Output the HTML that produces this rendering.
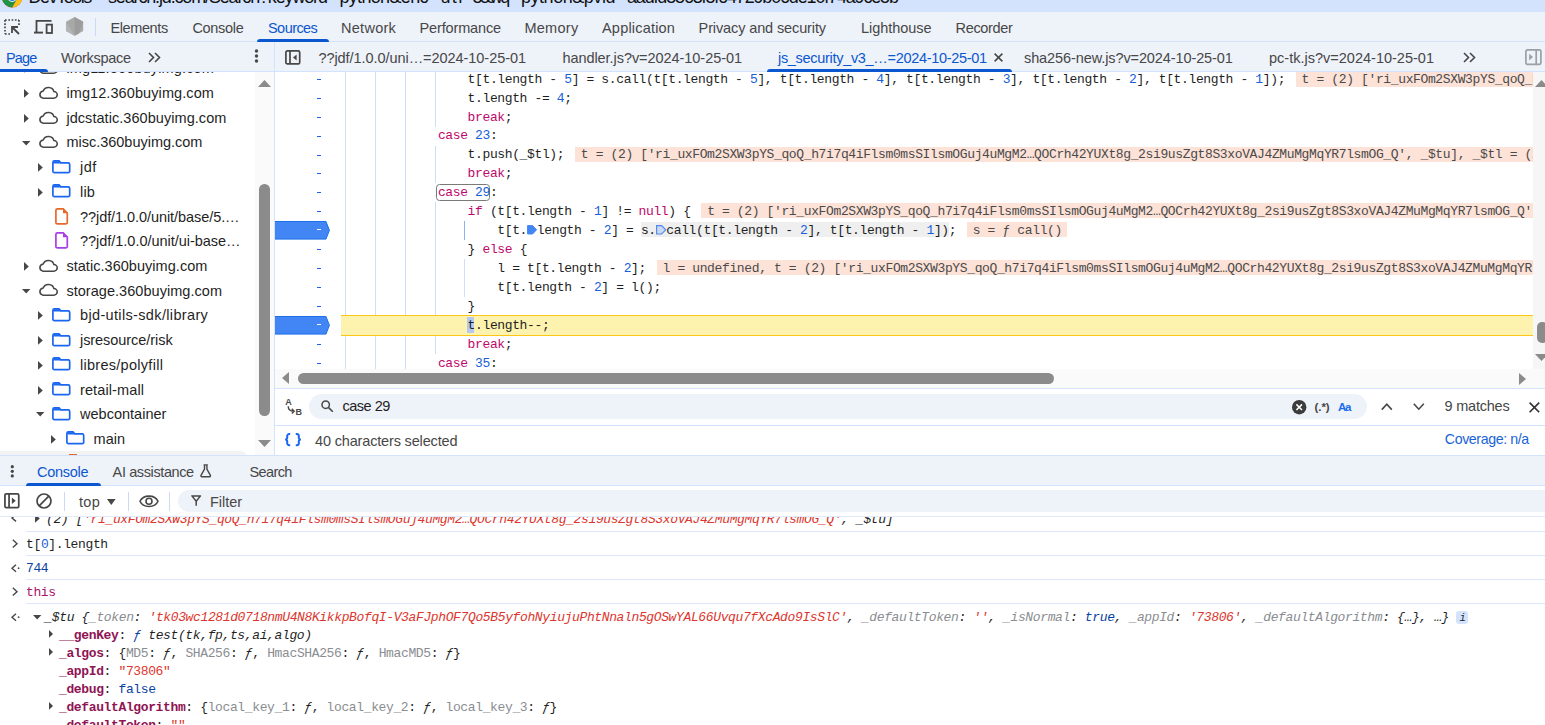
<!DOCTYPE html>
<html lang="en"><head><meta charset="utf-8"><title>DevTools</title>
<style>html,body{margin:0;padding:0;background:#fff;}body{width:1545px;height:725px;overflow:hidden;position:relative;-webkit-font-smoothing:antialiased;}svg{display:block;overflow:visible}</style></head>
<body>
<div style="position:absolute;left:0.00px;top:0.00px;width:1545.00px;height:12.00px;background:#d3e3fd;"></div>
<div style="position:absolute;left:0.00px;top:12.00px;width:1545.00px;height:29.50px;background:#eef2f9;"></div>
<div style="position:absolute;left:0.00px;top:41.00px;width:1545.00px;height:1.00px;background:#d3e3fd;"></div>
<div style="position:absolute;left:0.00px;top:42.00px;width:1545.00px;height:29.50px;background:#eef2f9;"></div>
<div style="position:absolute;left:0.00px;top:71.00px;width:1545.00px;height:1.00px;background:#d3e3fd;"></div>
<div style="position:absolute;left:274.00px;top:42.00px;width:1.00px;height:413.00px;background:#d3e3fd;"></div>
<svg style="position:absolute;left:2.00px;top:-13.50px;" width="20.40" height="20.40" viewBox="0 0 20 20" preserveAspectRatio="none">
<circle cx="10" cy="10" r="10" fill="#e33b2e"/>
<path d="M10 10 L1.34 5 A10 10 0 0 0 10 20 L14.3 12.5 Z" fill="#229342"/>
<path d="M10 10 L14.3 12.5 L10 20 A10 10 0 0 0 18.66 5 L10 5 Z" fill="#fbc116"/>
<circle cx="10" cy="10" r="4.6" fill="#fff"/>
<circle cx="10" cy="10" r="3.7" fill="#1a73e8"/></svg>
<div style="position:absolute;left:28.60px;top:-14.00px;height:22px;line-height:22px;font-family:'Liberation Sans', sans-serif;font-size:18px;color:#111;white-space:pre;letter-spacing:-1.4708px;">DevTools</div>
<div style="position:absolute;left:108.00px;top:-14.00px;height:22px;line-height:22px;font-family:'Liberation Sans', sans-serif;font-size:18px;color:#111;white-space:pre;letter-spacing:-1.1536px;">search.jd.com/Search?keyword</div>
<div style="position:absolute;left:339.40px;top:-14.00px;height:22px;line-height:22px;font-family:'Liberation Sans', sans-serif;font-size:18px;color:#111;white-space:pre;letter-spacing:-0.6609px;">python&amp;enc</div>
<div style="position:absolute;left:440.60px;top:-14.00px;height:22px;line-height:22px;font-family:'Liberation Sans', sans-serif;font-size:18px;color:#111;white-space:pre;letter-spacing:1.1537px;">utf</div>
<div style="position:absolute;left:472.50px;top:-14.00px;height:22px;line-height:22px;font-family:'Liberation Sans', sans-serif;font-size:18px;color:#111;white-space:pre;letter-spacing:-2.3804px;">8&amp;wq</div>
<div style="position:absolute;left:521.00px;top:-14.00px;height:22px;line-height:22px;font-family:'Liberation Sans', sans-serif;font-size:18px;color:#111;white-space:pre;letter-spacing:-0.4646px;">python&amp;pvid</div>
<div style="position:absolute;left:627.00px;top:-14.00px;height:22px;line-height:22px;font-family:'Liberation Sans', sans-serif;font-size:18px;color:#111;white-space:pre;letter-spacing:-1.1665px;">aadfd5563f5f64729b06de10f74a9ce5b</div>
<div style="position:absolute;left:97.00px;top:-17.00px;height:22px;line-height:22px;font-family:'Liberation Sans', sans-serif;font-size:18px;color:#111;white-space:pre;">-</div>
<div style="position:absolute;left:328.50px;top:-17.00px;height:22px;line-height:22px;font-family:'Liberation Sans', sans-serif;font-size:18px;color:#111;white-space:pre;">=</div>
<div style="position:absolute;left:429.50px;top:-17.00px;height:22px;line-height:22px;font-family:'Liberation Sans', sans-serif;font-size:18px;color:#111;white-space:pre;">=</div>
<div style="position:absolute;left:465.00px;top:-17.00px;height:22px;line-height:22px;font-family:'Liberation Sans', sans-serif;font-size:18px;color:#111;white-space:pre;">-</div>
<div style="position:absolute;left:510.50px;top:-17.00px;height:22px;line-height:22px;font-family:'Liberation Sans', sans-serif;font-size:18px;color:#111;white-space:pre;">=</div>
<div style="position:absolute;left:616.50px;top:-17.00px;height:22px;line-height:22px;font-family:'Liberation Sans', sans-serif;font-size:18px;color:#111;white-space:pre;">=</div>
<svg style="position:absolute;left:4.00px;top:19.00px;" width="16.00" height="16.00" viewBox="0 0 16 16" preserveAspectRatio="none">
<path d="M1 1 H15" stroke="#474747" stroke-width="1.7" stroke-dasharray="1.7 1.6" fill="none"/>
<path d="M1 1 V15" stroke="#474747" stroke-width="1.7" stroke-dasharray="1.7 1.6" fill="none"/>
<path d="M15 1 V6" stroke="#474747" stroke-width="1.7" stroke-dasharray="1.7 1.6" fill="none"/>
<path d="M1 15 H6" stroke="#474747" stroke-width="1.7" stroke-dasharray="1.7 1.6" fill="none"/>
<path d="M8 14 V8 H14 M8 8 L15 15" stroke="#474747" stroke-width="1.8" fill="none"/></svg>
<svg style="position:absolute;left:34.00px;top:19.50px;" width="19.00" height="14.00" viewBox="0 0 19 14" preserveAspectRatio="none">
<path d="M2.5 12 V0.9 H17.5" stroke="#474747" stroke-width="1.8" fill="none"/>
<path d="M0 12.6 H9" stroke="#474747" stroke-width="1.9" fill="none"/>
<rect x="12.6" y="4.6" width="5.4" height="8.4" stroke="#474747" stroke-width="1.8" fill="none"/></svg>
<svg style="position:absolute;left:65.80px;top:17.00px;" width="17.20" height="18.80" viewBox="0 0 17.2 18.8" preserveAspectRatio="none">
<path d="M8.6 0 L17.2 4.7 V14.1 L8.6 18.8 L0 14.1 V4.7 Z" fill="#a8a8a8"/>
<path d="M8.6 0 L17.2 4.7 L13 16.4 L8.6 18.8 Z" fill="#9c9c9c"/>
<path d="M0 4.7 L8.6 18.8 L0 14.1 Z" fill="#b4b4b4"/></svg>
<div style="position:absolute;left:95.00px;top:18.00px;width:1.00px;height:18.00px;background:#c9d9f6;"></div>
<div style="position:absolute;left:110.40px;top:19.00px;height:19px;line-height:19px;font-family:'Liberation Sans', sans-serif;font-size:14.5px;color:#474747;white-space:pre;letter-spacing:-0.3804px;">Elements</div>
<div style="position:absolute;left:192.40px;top:19.00px;height:19px;line-height:19px;font-family:'Liberation Sans', sans-serif;font-size:14.5px;color:#474747;white-space:pre;letter-spacing:-0.3082px;">Console</div>
<div style="position:absolute;left:268.00px;top:19.00px;height:19px;line-height:19px;font-family:'Liberation Sans', sans-serif;font-size:14.5px;color:#0b57d0;white-space:pre;letter-spacing:-0.5543px;">Sources</div>
<div style="position:absolute;left:341.00px;top:19.00px;height:19px;line-height:19px;font-family:'Liberation Sans', sans-serif;font-size:14.5px;color:#474747;white-space:pre;letter-spacing:0.2788px;">Network</div>
<div style="position:absolute;left:419.60px;top:19.00px;height:19px;line-height:19px;font-family:'Liberation Sans', sans-serif;font-size:14.5px;color:#474747;white-space:pre;letter-spacing:-0.1539px;">Performance</div>
<div style="position:absolute;left:524.40px;top:19.00px;height:19px;line-height:19px;font-family:'Liberation Sans', sans-serif;font-size:14.5px;color:#474747;white-space:pre;letter-spacing:0.2955px;">Memory</div>
<div style="position:absolute;left:602.00px;top:19.00px;height:19px;line-height:19px;font-family:'Liberation Sans', sans-serif;font-size:14.5px;color:#474747;white-space:pre;letter-spacing:0.1964px;">Application</div>
<div style="position:absolute;left:698.60px;top:19.00px;height:19px;line-height:19px;font-family:'Liberation Sans', sans-serif;font-size:14.5px;color:#474747;white-space:pre;letter-spacing:-0.1205px;">Privacy and security</div>
<div style="position:absolute;left:861.00px;top:19.00px;height:19px;line-height:19px;font-family:'Liberation Sans', sans-serif;font-size:14.5px;color:#474747;white-space:pre;letter-spacing:-0.0372px;">Lighthouse</div>
<div style="position:absolute;left:955.60px;top:19.00px;height:19px;line-height:19px;font-family:'Liberation Sans', sans-serif;font-size:14.5px;color:#474747;white-space:pre;letter-spacing:-0.3521px;">Recorder</div>
<div style="position:absolute;left:257.00px;top:39.00px;width:72.00px;height:3.00px;background:#0b57d0;border-radius:3px 3px 0 0;"></div>
<div style="position:absolute;left:6.00px;top:49.00px;height:19px;line-height:19px;font-family:'Liberation Sans', sans-serif;font-size:14.5px;color:#0b57d0;white-space:pre;letter-spacing:-0.8214px;">Page</div>
<div style="position:absolute;left:61.00px;top:49.00px;height:19px;line-height:19px;font-family:'Liberation Sans', sans-serif;font-size:14.5px;color:#474747;white-space:pre;letter-spacing:-0.2665px;">Workspace</div>
<div style="position:absolute;left:0.00px;top:69.00px;width:48.40px;height:2.60px;background:#0b57d0;border-radius:0 3px 0 0;"></div>
<svg style="position:absolute;left:148.20px;top:51.50px;" width="13.00" height="11.00" viewBox="0 0 13 11" preserveAspectRatio="none"><path d="M1 1 L5.5 5.5 L1 10 M7 1 L11.5 5.5 L7 10" stroke="#474747" stroke-width="1.6" fill="none"/></svg>
<svg style="position:absolute;left:254.20px;top:49.40px;" width="5.00" height="14.40" viewBox="0 0 5 14.4" preserveAspectRatio="none"><circle cx="2.5" cy="2" r="1.7" fill="#474747"/><circle cx="2.5" cy="7" r="1.7" fill="#474747"/><circle cx="2.5" cy="12" r="1.7" fill="#474747"/></svg>
<svg style="position:absolute;left:285.00px;top:49.60px;" width="15.60" height="14.80" viewBox="0 0 15.6 14.8" preserveAspectRatio="none">
<rect x="0.9" y="0.9" width="13.8" height="13" rx="1.5" stroke="#474747" stroke-width="1.7" fill="none"/>
<path d="M5 1 V14" stroke="#474747" stroke-width="1.7"/>
<path d="M11.6 4.4 L8 7.4 L11.6 10.4 Z" fill="#474747"/></svg>
<div style="position:absolute;left:318.40px;top:49.00px;height:19px;line-height:19px;font-family:'Liberation Sans', sans-serif;font-size:14.5px;color:#474747;white-space:pre;letter-spacing:-0.0543px;">??jdf/1.0.0/uni…=2024-10-25-01</div>
<div style="position:absolute;left:562.40px;top:49.00px;height:19px;line-height:19px;font-family:'Liberation Sans', sans-serif;font-size:14.5px;color:#474747;white-space:pre;letter-spacing:-0.0543px;">handler.js?v=2024-10-25-01</div>
<div style="position:absolute;left:778.00px;top:49.00px;height:19px;line-height:19px;font-family:'Liberation Sans', sans-serif;font-size:14.5px;color:#0b57d0;white-space:pre;letter-spacing:-0.3061px;">js_security_v3_…=2024-10-25-01</div>
<div style="position:absolute;left:1024.00px;top:49.00px;height:19px;line-height:19px;font-family:'Liberation Sans', sans-serif;font-size:14.5px;color:#474747;white-space:pre;letter-spacing:-0.0986px;">sha256-new.js?v=2024-10-25-01</div>
<div style="position:absolute;left:1269.00px;top:49.00px;height:19px;line-height:19px;font-family:'Liberation Sans', sans-serif;font-size:14.5px;color:#474747;white-space:pre;letter-spacing:0.0066px;">pc-tk.js?v=2024-10-25-01</div>
<svg style="position:absolute;left:993.60px;top:53.20px;" width="9.00" height="9.00" viewBox="0 0 9 9" preserveAspectRatio="none"><path d="M0.6 0.6 L8.4 8.4 M8.4 0.6 L0.6 8.4" stroke="#474747" stroke-width="1.5"/></svg>
<div style="position:absolute;left:767.00px;top:69.00px;width:244.60px;height:3.00px;background:#0b57d0;border-radius:3px 3px 0 0;"></div>
<svg style="position:absolute;left:1463.40px;top:51.50px;" width="13.00" height="11.00" viewBox="0 0 13 11" preserveAspectRatio="none"><path d="M1 1 L5.5 5.5 L1 10 M7 1 L11.5 5.5 L7 10" stroke="#474747" stroke-width="1.6" fill="none"/></svg>
<svg style="position:absolute;left:1525.40px;top:48.60px;" width="19.60" height="16.40" viewBox="0 0 19.6 16.4" preserveAspectRatio="none">
<rect x="0.9" y="0.9" width="15" height="14.4" rx="1.5" stroke="#9aa0a6" stroke-width="1.7" fill="none"/>
<path d="M11.2 1 V15" stroke="#9aa0a6" stroke-width="1.7"/>
<path d="M4.2 4.8 L8 8.1 L4.2 11.4 Z" fill="#9aa0a6"/></svg>
<div style="position:absolute;left:0;top:72px;width:274px;height:383px;overflow:hidden;background:#fff">
<svg style="position:absolute;left:23.60px;top:-7.71px;" width="4.80" height="8.80" viewBox="0 0 4.8 8.8" preserveAspectRatio="none"><path d="M0 0 L4.8 4.4 L0 8.8 Z" fill="#474747"/></svg>
<svg style="position:absolute;left:38.00px;top:-9.91px;" width="20.00" height="12.00" viewBox="0 0 20 12.8" preserveAspectRatio="none"><path d="M5.2 11.9 H15.6 A3.5 3.5 0 0 0 15.9 4.9 A5.6 5.6 0 0 0 5.2 4.2 A3.9 3.9 0 0 0 5.2 11.9 Z" stroke="#474747" stroke-width="1.6" fill="none" stroke-linejoin="round"/></svg>
<div style="position:absolute;left:66.40px;top:-13.00px;height:19px;line-height:19px;font-family:'Liberation Sans', sans-serif;font-size:14.5px;color:#1f1f1f;white-space:pre;letter-spacing:0.1507px;">img11.360buyimg.com</div>
<svg style="position:absolute;left:23.60px;top:17.00px;" width="4.80" height="8.80" viewBox="0 0 4.8 8.8" preserveAspectRatio="none"><path d="M0 0 L4.8 4.4 L0 8.8 Z" fill="#474747"/></svg>
<svg style="position:absolute;left:38.00px;top:14.80px;" width="20.00" height="12.00" viewBox="0 0 20 12.8" preserveAspectRatio="none"><path d="M5.2 11.9 H15.6 A3.5 3.5 0 0 0 15.9 4.9 A5.6 5.6 0 0 0 5.2 4.2 A3.9 3.9 0 0 0 5.2 11.9 Z" stroke="#474747" stroke-width="1.6" fill="none" stroke-linejoin="round"/></svg>
<div style="position:absolute;left:66.40px;top:12.00px;height:19px;line-height:19px;font-family:'Liberation Sans', sans-serif;font-size:14.5px;color:#1f1f1f;white-space:pre;letter-spacing:0.0924px;">img12.360buyimg.com</div>
<svg style="position:absolute;left:23.60px;top:41.71px;" width="4.80" height="8.80" viewBox="0 0 4.8 8.8" preserveAspectRatio="none"><path d="M0 0 L4.8 4.4 L0 8.8 Z" fill="#474747"/></svg>
<svg style="position:absolute;left:38.00px;top:39.51px;" width="20.00" height="12.00" viewBox="0 0 20 12.8" preserveAspectRatio="none"><path d="M5.2 11.9 H15.6 A3.5 3.5 0 0 0 15.9 4.9 A5.6 5.6 0 0 0 5.2 4.2 A3.9 3.9 0 0 0 5.2 11.9 Z" stroke="#474747" stroke-width="1.6" fill="none" stroke-linejoin="round"/></svg>
<div style="position:absolute;left:66.40px;top:37.00px;height:19px;line-height:19px;font-family:'Liberation Sans', sans-serif;font-size:14.5px;color:#1f1f1f;white-space:pre;letter-spacing:0.0549px;">jdcstatic.360buyimg.com</div>
<svg style="position:absolute;left:22.00px;top:68.62px;" width="8.40" height="4.60" viewBox="0 0 8.4 4.6" preserveAspectRatio="none"><path d="M0 0 H8.4 L4.2 4.6 Z" fill="#474747"/></svg>
<svg style="position:absolute;left:38.00px;top:64.22px;" width="20.00" height="12.00" viewBox="0 0 20 12.8" preserveAspectRatio="none"><path d="M5.2 11.9 H15.6 A3.5 3.5 0 0 0 15.9 4.9 A5.6 5.6 0 0 0 5.2 4.2 A3.9 3.9 0 0 0 5.2 11.9 Z" stroke="#474747" stroke-width="1.6" fill="none" stroke-linejoin="round"/></svg>
<div style="position:absolute;left:66.40px;top:61.00px;height:19px;line-height:19px;font-family:'Liberation Sans', sans-serif;font-size:14.5px;color:#1f1f1f;white-space:pre;letter-spacing:-0.0107px;">misc.360buyimg.com</div>
<svg style="position:absolute;left:38.00px;top:91.13px;" width="4.80" height="8.80" viewBox="0 0 4.8 8.8" preserveAspectRatio="none"><path d="M0 0 L4.8 4.4 L0 8.8 Z" fill="#474747"/></svg>
<svg style="position:absolute;left:52.00px;top:87.53px;" width="18.60" height="13.60" viewBox="0 0 18.6 13.6" preserveAspectRatio="none"><path d="M2.4 0.9 H7 L8.8 2.9 H16.2 A1.5 1.5 0 0 1 17.7 4.4 V11.2 A1.5 1.5 0 0 1 16.2 12.7 H2.4 A1.5 1.5 0 0 1 0.9 11.2 V2.4 A1.5 1.5 0 0 1 2.4 0.9 Z" stroke="#1a66f0" stroke-width="1.7" fill="none"/><path d="M1.4 1.2 H7 L8.8 3.4 H1.4 Z" fill="#1a66f0"/></svg>
<div style="position:absolute;left:80.00px;top:86.00px;height:19px;line-height:19px;font-family:'Liberation Sans', sans-serif;font-size:14.5px;color:#1f1f1f;white-space:pre;letter-spacing:0.4288px;">jdf</div>
<svg style="position:absolute;left:38.00px;top:115.84px;" width="4.80" height="8.80" viewBox="0 0 4.8 8.8" preserveAspectRatio="none"><path d="M0 0 L4.8 4.4 L0 8.8 Z" fill="#474747"/></svg>
<svg style="position:absolute;left:52.00px;top:112.24px;" width="18.60" height="13.60" viewBox="0 0 18.6 13.6" preserveAspectRatio="none"><path d="M2.4 0.9 H7 L8.8 2.9 H16.2 A1.5 1.5 0 0 1 17.7 4.4 V11.2 A1.5 1.5 0 0 1 16.2 12.7 H2.4 A1.5 1.5 0 0 1 0.9 11.2 V2.4 A1.5 1.5 0 0 1 2.4 0.9 Z" stroke="#1a66f0" stroke-width="1.7" fill="none"/><path d="M1.4 1.2 H7 L8.8 3.4 H1.4 Z" fill="#1a66f0"/></svg>
<div style="position:absolute;left:80.00px;top:111.00px;height:19px;line-height:19px;font-family:'Liberation Sans', sans-serif;font-size:14.5px;color:#1f1f1f;white-space:pre;letter-spacing:0.1938px;">lib</div>
<svg style="position:absolute;left:55.40px;top:135.75px;" width="13.20" height="16.80" viewBox="0 0 13.2 16.8" preserveAspectRatio="none"><path d="M2.4 0.9 H8.2 L12.3 5 V14.4 A1.5 1.5 0 0 1 10.8 15.9 H2.4 A1.5 1.5 0 0 1 0.9 14.4 V2.4 A1.5 1.5 0 0 1 2.4 0.9 Z" stroke="#e8682a" stroke-width="1.7" fill="none"/><path d="M8 1 V5.2 H12.2 Z" fill="#e8682a"/></svg>
<div style="position:absolute;left:80.00px;top:136.00px;height:19px;line-height:19px;font-family:'Liberation Sans', sans-serif;font-size:14.5px;color:#1f1f1f;white-space:pre;letter-spacing:-0.0667px;">??jdf/1.0.0/unit/base/5.…</div>
<svg style="position:absolute;left:55.40px;top:160.46px;" width="13.20" height="16.80" viewBox="0 0 13.2 16.8" preserveAspectRatio="none"><path d="M2.4 0.9 H8.2 L12.3 5 V14.4 A1.5 1.5 0 0 1 10.8 15.9 H2.4 A1.5 1.5 0 0 1 0.9 14.4 V2.4 A1.5 1.5 0 0 1 2.4 0.9 Z" stroke="#a83ee6" stroke-width="1.7" fill="none"/><path d="M8 1 V5.2 H12.2 Z" fill="#a83ee6"/></svg>
<div style="position:absolute;left:80.00px;top:160.00px;height:19px;line-height:19px;font-family:'Liberation Sans', sans-serif;font-size:14.5px;color:#1f1f1f;white-space:pre;letter-spacing:-0.0253px;">??jdf/1.0.0/unit/ui-base…</div>
<svg style="position:absolute;left:23.60px;top:189.97px;" width="4.80" height="8.80" viewBox="0 0 4.8 8.8" preserveAspectRatio="none"><path d="M0 0 L4.8 4.4 L0 8.8 Z" fill="#474747"/></svg>
<svg style="position:absolute;left:38.00px;top:187.77px;" width="20.00" height="12.00" viewBox="0 0 20 12.8" preserveAspectRatio="none"><path d="M5.2 11.9 H15.6 A3.5 3.5 0 0 0 15.9 4.9 A5.6 5.6 0 0 0 5.2 4.2 A3.9 3.9 0 0 0 5.2 11.9 Z" stroke="#474747" stroke-width="1.6" fill="none" stroke-linejoin="round"/></svg>
<div style="position:absolute;left:66.40px;top:185.00px;height:19px;line-height:19px;font-family:'Liberation Sans', sans-serif;font-size:14.5px;color:#1f1f1f;white-space:pre;letter-spacing:0.0393px;">static.360buyimg.com</div>
<svg style="position:absolute;left:22.00px;top:216.88px;" width="8.40" height="4.60" viewBox="0 0 8.4 4.6" preserveAspectRatio="none"><path d="M0 0 H8.4 L4.2 4.6 Z" fill="#474747"/></svg>
<svg style="position:absolute;left:38.00px;top:212.48px;" width="20.00" height="12.00" viewBox="0 0 20 12.8" preserveAspectRatio="none"><path d="M5.2 11.9 H15.6 A3.5 3.5 0 0 0 15.9 4.9 A5.6 5.6 0 0 0 5.2 4.2 A3.9 3.9 0 0 0 5.2 11.9 Z" stroke="#474747" stroke-width="1.6" fill="none" stroke-linejoin="round"/></svg>
<div style="position:absolute;left:66.40px;top:210.00px;height:19px;line-height:19px;font-family:'Liberation Sans', sans-serif;font-size:14.5px;color:#1f1f1f;white-space:pre;letter-spacing:0.0415px;">storage.360buyimg.com</div>
<svg style="position:absolute;left:38.00px;top:239.39px;" width="4.80" height="8.80" viewBox="0 0 4.8 8.8" preserveAspectRatio="none"><path d="M0 0 L4.8 4.4 L0 8.8 Z" fill="#474747"/></svg>
<svg style="position:absolute;left:52.00px;top:235.79px;" width="18.60" height="13.60" viewBox="0 0 18.6 13.6" preserveAspectRatio="none"><path d="M2.4 0.9 H7 L8.8 2.9 H16.2 A1.5 1.5 0 0 1 17.7 4.4 V11.2 A1.5 1.5 0 0 1 16.2 12.7 H2.4 A1.5 1.5 0 0 1 0.9 11.2 V2.4 A1.5 1.5 0 0 1 2.4 0.9 Z" stroke="#1a66f0" stroke-width="1.7" fill="none"/><path d="M1.4 1.2 H7 L8.8 3.4 H1.4 Z" fill="#1a66f0"/></svg>
<div style="position:absolute;left:80.00px;top:234.00px;height:19px;line-height:19px;font-family:'Liberation Sans', sans-serif;font-size:14.5px;color:#1f1f1f;white-space:pre;letter-spacing:0.3476px;">bjd-utils-sdk/library</div>
<svg style="position:absolute;left:38.00px;top:264.10px;" width="4.80" height="8.80" viewBox="0 0 4.8 8.8" preserveAspectRatio="none"><path d="M0 0 L4.8 4.4 L0 8.8 Z" fill="#474747"/></svg>
<svg style="position:absolute;left:52.00px;top:260.50px;" width="18.60" height="13.60" viewBox="0 0 18.6 13.6" preserveAspectRatio="none"><path d="M2.4 0.9 H7 L8.8 2.9 H16.2 A1.5 1.5 0 0 1 17.7 4.4 V11.2 A1.5 1.5 0 0 1 16.2 12.7 H2.4 A1.5 1.5 0 0 1 0.9 11.2 V2.4 A1.5 1.5 0 0 1 2.4 0.9 Z" stroke="#1a66f0" stroke-width="1.7" fill="none"/><path d="M1.4 1.2 H7 L8.8 3.4 H1.4 Z" fill="#1a66f0"/></svg>
<div style="position:absolute;left:80.00px;top:259.00px;height:19px;line-height:19px;font-family:'Liberation Sans', sans-serif;font-size:14.5px;color:#1f1f1f;white-space:pre;letter-spacing:-0.0599px;">jsresource/risk</div>
<svg style="position:absolute;left:38.00px;top:288.81px;" width="4.80" height="8.80" viewBox="0 0 4.8 8.8" preserveAspectRatio="none"><path d="M0 0 L4.8 4.4 L0 8.8 Z" fill="#474747"/></svg>
<svg style="position:absolute;left:52.00px;top:285.21px;" width="18.60" height="13.60" viewBox="0 0 18.6 13.6" preserveAspectRatio="none"><path d="M2.4 0.9 H7 L8.8 2.9 H16.2 A1.5 1.5 0 0 1 17.7 4.4 V11.2 A1.5 1.5 0 0 1 16.2 12.7 H2.4 A1.5 1.5 0 0 1 0.9 11.2 V2.4 A1.5 1.5 0 0 1 2.4 0.9 Z" stroke="#1a66f0" stroke-width="1.7" fill="none"/><path d="M1.4 1.2 H7 L8.8 3.4 H1.4 Z" fill="#1a66f0"/></svg>
<div style="position:absolute;left:80.00px;top:284.00px;height:19px;line-height:19px;font-family:'Liberation Sans', sans-serif;font-size:14.5px;color:#1f1f1f;white-space:pre;letter-spacing:0.2769px;">libres/polyfill</div>
<svg style="position:absolute;left:38.00px;top:313.52px;" width="4.80" height="8.80" viewBox="0 0 4.8 8.8" preserveAspectRatio="none"><path d="M0 0 L4.8 4.4 L0 8.8 Z" fill="#474747"/></svg>
<svg style="position:absolute;left:52.00px;top:309.92px;" width="18.60" height="13.60" viewBox="0 0 18.6 13.6" preserveAspectRatio="none"><path d="M2.4 0.9 H7 L8.8 2.9 H16.2 A1.5 1.5 0 0 1 17.7 4.4 V11.2 A1.5 1.5 0 0 1 16.2 12.7 H2.4 A1.5 1.5 0 0 1 0.9 11.2 V2.4 A1.5 1.5 0 0 1 2.4 0.9 Z" stroke="#1a66f0" stroke-width="1.7" fill="none"/><path d="M1.4 1.2 H7 L8.8 3.4 H1.4 Z" fill="#1a66f0"/></svg>
<div style="position:absolute;left:80.00px;top:309.00px;height:19px;line-height:19px;font-family:'Liberation Sans', sans-serif;font-size:14.5px;color:#1f1f1f;white-space:pre;letter-spacing:0.1101px;">retail-mall</div>
<svg style="position:absolute;left:36.00px;top:340.43px;" width="8.40" height="4.60" viewBox="0 0 8.4 4.6" preserveAspectRatio="none"><path d="M0 0 H8.4 L4.2 4.6 Z" fill="#474747"/></svg>
<svg style="position:absolute;left:52.00px;top:334.63px;" width="18.60" height="13.60" viewBox="0 0 18.6 13.6" preserveAspectRatio="none"><path d="M2.4 0.9 H7 L8.8 2.9 H16.2 A1.5 1.5 0 0 1 17.7 4.4 V11.2 A1.5 1.5 0 0 1 16.2 12.7 H2.4 A1.5 1.5 0 0 1 0.9 11.2 V2.4 A1.5 1.5 0 0 1 2.4 0.9 Z" stroke="#1a66f0" stroke-width="1.7" fill="none"/><path d="M1.4 1.2 H7 L8.8 3.4 H1.4 Z" fill="#1a66f0"/></svg>
<div style="position:absolute;left:80.00px;top:333.00px;height:19px;line-height:19px;font-family:'Liberation Sans', sans-serif;font-size:14.5px;color:#1f1f1f;white-space:pre;letter-spacing:0.0130px;">webcontainer</div>
<svg style="position:absolute;left:51.00px;top:362.94px;" width="4.80" height="8.80" viewBox="0 0 4.8 8.8" preserveAspectRatio="none"><path d="M0 0 L4.8 4.4 L0 8.8 Z" fill="#474747"/></svg>
<svg style="position:absolute;left:66.00px;top:359.34px;" width="18.60" height="13.60" viewBox="0 0 18.6 13.6" preserveAspectRatio="none"><path d="M2.4 0.9 H7 L8.8 2.9 H16.2 A1.5 1.5 0 0 1 17.7 4.4 V11.2 A1.5 1.5 0 0 1 16.2 12.7 H2.4 A1.5 1.5 0 0 1 0.9 11.2 V2.4 A1.5 1.5 0 0 1 2.4 0.9 Z" stroke="#1a66f0" stroke-width="1.7" fill="none"/><path d="M1.4 1.2 H7 L8.8 3.4 H1.4 Z" fill="#1a66f0"/></svg>
<div style="position:absolute;left:93.60px;top:358.00px;height:19px;line-height:19px;font-family:'Liberation Sans', sans-serif;font-size:14.5px;color:#1f1f1f;white-space:pre;letter-spacing:-0.0107px;">main</div>
<div style="position:absolute;left:0.00px;top:379.00px;width:248.00px;height:10.00px;background:#f3f3f3;border-radius:0 8px 0 0;"></div>
<div style="position:absolute;left:69.00px;top:382.00px;width:8.00px;height:2.00px;background:#e8682a;"></div>
<div style="position:absolute;left:255.00px;top:0.00px;width:19.00px;height:384.00px;background:#fafafa;"></div>
<svg style="position:absolute;left:258.20px;top:7.80px;" width="13.00" height="7.20" viewBox="0 0 13 7.2" preserveAspectRatio="none"><path d="M0 7 L6.5 0 L13 7 Z" fill="#8b8b8b"/></svg>
<svg style="position:absolute;left:258.40px;top:368.00px;" width="13.00" height="7.00" viewBox="0 0 13 7" preserveAspectRatio="none"><path d="M0 0 L6.5 7 L13 0 Z" fill="#8b8b8b"/></svg>
<div style="position:absolute;left:259.40px;top:112.00px;width:10.80px;height:231.60px;background:#8b8b8b;border-radius:5.4px;"></div>
</div>
<div style="position:absolute;left:275px;top:72px;width:1258px;height:297px;overflow:hidden;background:#fff">
<div style="position:absolute;left:70.40px;top:-1.70px;width:1.00px;height:18.90px;background:#cfdef8;"></div>
<div style="position:absolute;left:100.12px;top:-1.70px;width:1.00px;height:18.90px;background:#cfdef8;"></div>
<div style="position:absolute;left:129.85px;top:-1.70px;width:1.00px;height:18.90px;background:#cfdef8;"></div>
<div style="position:absolute;left:159.57px;top:-1.70px;width:1.00px;height:18.90px;background:#cfdef8;"></div>
<div style="position:absolute;left:70.40px;top:16.90px;width:1.00px;height:19.20px;background:#cfdef8;"></div>
<div style="position:absolute;left:100.12px;top:16.90px;width:1.00px;height:19.20px;background:#cfdef8;"></div>
<div style="position:absolute;left:129.85px;top:16.90px;width:1.00px;height:19.20px;background:#cfdef8;"></div>
<div style="position:absolute;left:159.57px;top:16.90px;width:1.00px;height:19.20px;background:#cfdef8;"></div>
<div style="position:absolute;left:70.40px;top:35.80px;width:1.00px;height:19.20px;background:#cfdef8;"></div>
<div style="position:absolute;left:100.12px;top:35.80px;width:1.00px;height:19.20px;background:#cfdef8;"></div>
<div style="position:absolute;left:129.85px;top:35.80px;width:1.00px;height:19.20px;background:#cfdef8;"></div>
<div style="position:absolute;left:159.57px;top:35.80px;width:1.00px;height:19.20px;background:#cfdef8;"></div>
<div style="position:absolute;left:70.40px;top:54.70px;width:1.00px;height:19.30px;background:#cfdef8;"></div>
<div style="position:absolute;left:100.12px;top:54.70px;width:1.00px;height:19.30px;background:#cfdef8;"></div>
<div style="position:absolute;left:129.85px;top:54.70px;width:1.00px;height:19.30px;background:#cfdef8;"></div>
<div style="position:absolute;left:70.40px;top:73.70px;width:1.00px;height:18.60px;background:#cfdef8;"></div>
<div style="position:absolute;left:100.12px;top:73.70px;width:1.00px;height:18.60px;background:#cfdef8;"></div>
<div style="position:absolute;left:129.85px;top:73.70px;width:1.00px;height:18.60px;background:#cfdef8;"></div>
<div style="position:absolute;left:159.57px;top:73.70px;width:1.00px;height:18.60px;background:#cfdef8;"></div>
<div style="position:absolute;left:70.40px;top:92.00px;width:1.00px;height:19.40px;background:#cfdef8;"></div>
<div style="position:absolute;left:100.12px;top:92.00px;width:1.00px;height:19.40px;background:#cfdef8;"></div>
<div style="position:absolute;left:129.85px;top:92.00px;width:1.00px;height:19.40px;background:#cfdef8;"></div>
<div style="position:absolute;left:159.57px;top:92.00px;width:1.00px;height:19.40px;background:#cfdef8;"></div>
<div style="position:absolute;left:70.40px;top:111.10px;width:1.00px;height:19.10px;background:#cfdef8;"></div>
<div style="position:absolute;left:100.12px;top:111.10px;width:1.00px;height:19.10px;background:#cfdef8;"></div>
<div style="position:absolute;left:129.85px;top:111.10px;width:1.00px;height:19.10px;background:#cfdef8;"></div>
<div style="position:absolute;left:70.40px;top:129.90px;width:1.00px;height:19.30px;background:#cfdef8;"></div>
<div style="position:absolute;left:100.12px;top:129.90px;width:1.00px;height:19.30px;background:#cfdef8;"></div>
<div style="position:absolute;left:129.85px;top:129.90px;width:1.00px;height:19.30px;background:#cfdef8;"></div>
<div style="position:absolute;left:159.57px;top:129.90px;width:1.00px;height:19.30px;background:#cfdef8;"></div>
<div style="position:absolute;left:70.40px;top:148.90px;width:1.00px;height:19.50px;background:#cfdef8;"></div>
<div style="position:absolute;left:100.12px;top:148.90px;width:1.00px;height:19.50px;background:#cfdef8;"></div>
<div style="position:absolute;left:129.85px;top:148.90px;width:1.00px;height:19.50px;background:#cfdef8;"></div>
<div style="position:absolute;left:159.57px;top:148.90px;width:1.00px;height:19.50px;background:#cfdef8;"></div>
<div style="position:absolute;left:189.30px;top:148.90px;width:1.00px;height:19.50px;background:#8fb2ee;"></div>
<div style="position:absolute;left:70.40px;top:168.10px;width:1.00px;height:19.20px;background:#cfdef8;"></div>
<div style="position:absolute;left:100.12px;top:168.10px;width:1.00px;height:19.20px;background:#cfdef8;"></div>
<div style="position:absolute;left:129.85px;top:168.10px;width:1.00px;height:19.20px;background:#cfdef8;"></div>
<div style="position:absolute;left:159.57px;top:168.10px;width:1.00px;height:19.20px;background:#cfdef8;"></div>
<div style="position:absolute;left:70.40px;top:187.00px;width:1.00px;height:19.10px;background:#cfdef8;"></div>
<div style="position:absolute;left:100.12px;top:187.00px;width:1.00px;height:19.10px;background:#cfdef8;"></div>
<div style="position:absolute;left:129.85px;top:187.00px;width:1.00px;height:19.10px;background:#cfdef8;"></div>
<div style="position:absolute;left:159.57px;top:187.00px;width:1.00px;height:19.10px;background:#cfdef8;"></div>
<div style="position:absolute;left:189.30px;top:187.00px;width:1.00px;height:19.10px;background:#cfdef8;"></div>
<div style="position:absolute;left:70.40px;top:205.80px;width:1.00px;height:19.30px;background:#cfdef8;"></div>
<div style="position:absolute;left:100.12px;top:205.80px;width:1.00px;height:19.30px;background:#cfdef8;"></div>
<div style="position:absolute;left:129.85px;top:205.80px;width:1.00px;height:19.30px;background:#cfdef8;"></div>
<div style="position:absolute;left:159.57px;top:205.80px;width:1.00px;height:19.30px;background:#cfdef8;"></div>
<div style="position:absolute;left:189.30px;top:205.80px;width:1.00px;height:19.30px;background:#cfdef8;"></div>
<div style="position:absolute;left:70.40px;top:224.80px;width:1.00px;height:19.40px;background:#cfdef8;"></div>
<div style="position:absolute;left:100.12px;top:224.80px;width:1.00px;height:19.40px;background:#cfdef8;"></div>
<div style="position:absolute;left:129.85px;top:224.80px;width:1.00px;height:19.40px;background:#cfdef8;"></div>
<div style="position:absolute;left:159.57px;top:224.80px;width:1.00px;height:19.40px;background:#cfdef8;"></div>
<div style="position:absolute;left:70.40px;top:262.90px;width:1.00px;height:19.30px;background:#cfdef8;"></div>
<div style="position:absolute;left:100.12px;top:262.90px;width:1.00px;height:19.30px;background:#cfdef8;"></div>
<div style="position:absolute;left:129.85px;top:262.90px;width:1.00px;height:19.30px;background:#cfdef8;"></div>
<div style="position:absolute;left:159.57px;top:262.90px;width:1.00px;height:19.30px;background:#cfdef8;"></div>
<div style="position:absolute;left:70.40px;top:281.90px;width:1.00px;height:19.23px;background:#cfdef8;"></div>
<div style="position:absolute;left:100.12px;top:281.90px;width:1.00px;height:19.23px;background:#cfdef8;"></div>
<div style="position:absolute;left:129.85px;top:281.90px;width:1.00px;height:19.23px;background:#cfdef8;"></div>
<div style="position:absolute;left:41.80px;top:7.00px;width:4.60px;height:1.30px;background:#2460e0;"></div>
<div style="position:absolute;left:192.60px;top:-2.00px;height:19px;line-height:19px;font-family:'Liberation Mono', monospace;font-size:13.0px;color:#1f1f1f;white-space:pre;letter-spacing:-0.3703px;">t[t.length - <span style="color:#1660d8">5</span>] = s.call(t[t.length - <span style="color:#1660d8">5</span>], t[t.length - <span style="color:#1660d8">4</span>], t[t.length - <span style="color:#1660d8">3</span>], t[t.length - <span style="color:#1660d8">2</span>], t[t.length - <span style="color:#1660d8">1</span>]);</div>
<div style="position:absolute;left:1020.91px;top:-0.40px;width:1199.96px;height:15.00px;background:#fde2d8;"></div>
<div style="position:absolute;left:1026.61px;top:-2.00px;height:19px;line-height:19px;font-family:'Liberation Mono', monospace;font-size:13.0px;color:#4a4a4a;white-space:pre;letter-spacing:-0.3703px;">t = (2) ['ri_uxFOm2SXW3pYS_qoQ_h7i7q4iFlsm0msSIlsmOGuj4uMgM2…QOCrh42YUXt8g_2si9usZgt8S3xoVAJ4ZMuMgMqYR7lsmOG_Q', _$tu], _$tl = (2) ['u', 'length'], s = ƒ call()</div>
<div style="position:absolute;left:41.80px;top:26.00px;width:4.60px;height:1.30px;background:#2460e0;"></div>
<div style="position:absolute;left:192.60px;top:17.00px;height:19px;line-height:19px;font-family:'Liberation Mono', monospace;font-size:13.0px;color:#1f1f1f;white-space:pre;letter-spacing:-0.3703px;">t.length -= <span style="color:#1660d8">4</span>;</div>
<div style="position:absolute;left:41.80px;top:45.00px;width:4.60px;height:1.30px;background:#2460e0;"></div>
<div style="position:absolute;left:192.60px;top:36.00px;height:19px;line-height:19px;font-family:'Liberation Mono', monospace;font-size:13.0px;color:#1f1f1f;white-space:pre;letter-spacing:-0.3703px;"><span style="color:#c0086a">break</span>;</div>
<div style="position:absolute;left:41.80px;top:64.00px;width:4.60px;height:1.30px;background:#2460e0;"></div>
<div style="position:absolute;left:162.88px;top:54.00px;height:19px;line-height:19px;font-family:'Liberation Mono', monospace;font-size:13.0px;color:#1f1f1f;white-space:pre;letter-spacing:-0.3703px;"><span style="color:#c0086a">case</span> <span style="color:#1660d8">23</span>:</div>
<div style="position:absolute;left:41.80px;top:83.00px;width:4.60px;height:1.30px;background:#2460e0;"></div>
<div style="position:absolute;left:192.60px;top:73.00px;height:19px;line-height:19px;font-family:'Liberation Mono', monospace;font-size:13.0px;color:#1f1f1f;white-space:pre;letter-spacing:-0.3703px;">t.push(_$tl);</div>
<div style="position:absolute;left:300.10px;top:75.00px;width:1095.93px;height:15.00px;background:#fde2d8;"></div>
<div style="position:absolute;left:305.80px;top:73.00px;height:19px;line-height:19px;font-family:'Liberation Mono', monospace;font-size:13.0px;color:#4a4a4a;white-space:pre;letter-spacing:-0.3703px;">t = (2) ['ri_uxFOm2SXW3pYS_qoQ_h7i7q4iFlsm0msSIlsmOGuj4uMgM2…QOCrh42YUXt8g_2si9usZgt8S3xoVAJ4ZMuMgMqYR7lsmOG_Q', _$tu], _$tl = (2) ['u', 'length']</div>
<div style="position:absolute;left:41.80px;top:101.00px;width:4.60px;height:1.30px;background:#2460e0;"></div>
<div style="position:absolute;left:192.60px;top:92.00px;height:19px;line-height:19px;font-family:'Liberation Mono', monospace;font-size:13.0px;color:#1f1f1f;white-space:pre;letter-spacing:-0.3703px;"><span style="color:#c0086a">break</span>;</div>
<div style="position:absolute;left:41.80px;top:120.00px;width:4.60px;height:1.30px;background:#2460e0;"></div>
<div style="position:absolute;left:161.40px;top:111.70px;width:53.40px;height:17.20px;background:transparent;border:1px solid #7a7a7a;border-radius:3.5px;box-sizing:border-box;"></div>
<div style="position:absolute;left:162.88px;top:111.00px;height:19px;line-height:19px;font-family:'Liberation Mono', monospace;font-size:13.0px;color:#1f1f1f;white-space:pre;letter-spacing:-0.3703px;"><span style="color:#c0086a">case</span> <span style="color:#1660d8">29</span>:</div>
<div style="position:absolute;left:41.80px;top:139.00px;width:4.60px;height:1.30px;background:#2460e0;"></div>
<div style="position:absolute;left:192.60px;top:130.00px;height:19px;line-height:19px;font-family:'Liberation Mono', monospace;font-size:13.0px;color:#1f1f1f;white-space:pre;letter-spacing:-0.3703px;"><span style="color:#c0086a">if</span> (t[t.length - <span style="color:#1660d8">1</span>] != <span style="color:#c0086a">null</span>) {</div>
<div style="position:absolute;left:426.43px;top:131.20px;width:887.86px;height:15.00px;background:#fde2d8;"></div>
<div style="position:absolute;left:432.13px;top:130.00px;height:19px;line-height:19px;font-family:'Liberation Mono', monospace;font-size:13.0px;color:#4a4a4a;white-space:pre;letter-spacing:-0.3703px;">t = (2) ['ri_uxFOm2SXW3pYS_qoQ_h7i7q4iFlsm0msSIlsmOGuj4uMgM2…QOCrh42YUXt8g_2si9usZgt8S3xoVAJ4ZMuMgMqYR7lsmOG_Q', _$tu]</div>
<svg style="position:absolute;left:0.00px;top:148.90px;" width="55.00" height="18.60" viewBox="0 0 55 18.6" preserveAspectRatio="none"><path d="M-2 0.5 H51 L54.4 9.3 L51 18.1 H-2 Z" fill="#4285f4" stroke="#1a6fe8" stroke-width="1"/></svg>
<div style="position:absolute;left:41.80px;top:157.00px;width:4.60px;height:1.30px;background:#fff;"></div>
<div style="position:absolute;left:222.32px;top:149.00px;height:19px;line-height:19px;font-family:'Liberation Mono', monospace;font-size:13.0px;color:#1f1f1f;white-space:pre;letter-spacing:-0.3703px;">t[t.</div>
<svg style="position:absolute;left:251.75px;top:152.50px;" width="10.20" height="9.60" viewBox="0 0 10.2 9.6" preserveAspectRatio="none"><path d="M0.6 0.6 H5.6 L9.6 4.8 L5.6 9 H0.6 Z" fill="#4285f4" stroke="#4285f4" stroke-width="1"/></svg>
<div style="position:absolute;left:261.85px;top:149.00px;height:19px;line-height:19px;font-family:'Liberation Mono', monospace;font-size:13.0px;color:#1f1f1f;white-space:pre;letter-spacing:-0.3703px;">length - <span style="color:#1660d8">2</span>] = </div>
<div style="position:absolute;left:365.88px;top:149.90px;width:307.84px;height:15.40px;background:#efeff0;"></div>
<div style="position:absolute;left:365.88px;top:149.00px;height:19px;line-height:19px;font-family:'Liberation Mono', monospace;font-size:13.0px;color:#1f1f1f;white-space:pre;letter-spacing:-0.3703px;">s.</div>
<svg style="position:absolute;left:380.94px;top:152.50px;" width="10.40" height="9.60" viewBox="0 0 10.4 9.6" preserveAspectRatio="none"><path d="M0.6 0.6 H5.6 L9.8 4.8 L5.6 9 H0.6 Z" fill="#c8d9f6" stroke="#4f86e8" stroke-width="1.1"/></svg>
<div style="position:absolute;left:391.34px;top:149.00px;height:19px;line-height:19px;font-family:'Liberation Mono', monospace;font-size:13.0px;color:#1f1f1f;white-space:pre;letter-spacing:-0.3703px;">call(t[t.length - <span style="color:#1660d8">2</span>], t[t.length - <span style="color:#1660d8">1</span>]);</div>
<div style="position:absolute;left:692.05px;top:150.20px;width:100.17px;height:15.00px;background:#fde2d8;"></div>
<div style="position:absolute;left:697.75px;top:149.00px;height:19px;line-height:19px;font-family:'Liberation Mono', monospace;font-size:13.0px;color:#4a4a4a;white-space:pre;letter-spacing:-0.3703px;">s = ƒ call()</div>
<div style="position:absolute;left:41.80px;top:177.00px;width:4.60px;height:1.30px;background:#2460e0;"></div>
<div style="position:absolute;left:192.60px;top:168.00px;height:19px;line-height:19px;font-family:'Liberation Mono', monospace;font-size:13.0px;color:#1f1f1f;white-space:pre;letter-spacing:-0.3703px;">} <span style="color:#c0086a">else</span> {</div>
<div style="position:absolute;left:41.80px;top:196.00px;width:4.60px;height:1.30px;background:#2460e0;"></div>
<div style="position:absolute;left:222.32px;top:187.00px;height:19px;line-height:19px;font-family:'Liberation Mono', monospace;font-size:13.0px;color:#1f1f1f;white-space:pre;letter-spacing:-0.3703px;">l = t[t.length - <span style="color:#1660d8">2</span>];</div>
<div style="position:absolute;left:381.84px;top:188.30px;width:999.32px;height:15.00px;background:#fde2d8;"></div>
<div style="position:absolute;left:387.54px;top:187.00px;height:19px;line-height:19px;font-family:'Liberation Mono', monospace;font-size:13.0px;color:#4a4a4a;white-space:pre;letter-spacing:-0.3703px;">l = undefined, t = (2) ['ri_uxFOm2SXW3pYS_qoQ_h7i7q4iFlsm0msSIlsmOGuj4uMgM2…QOCrh42YUXt8g_2si9usZgt8S3xoVAJ4ZMuMgMqYR7lsmOG_Q', _$tu]</div>
<div style="position:absolute;left:41.80px;top:215.00px;width:4.60px;height:1.30px;background:#2460e0;"></div>
<div style="position:absolute;left:222.32px;top:206.00px;height:19px;line-height:19px;font-family:'Liberation Mono', monospace;font-size:13.0px;color:#1f1f1f;white-space:pre;letter-spacing:-0.3703px;">t[t.length - <span style="color:#1660d8">2</span>] = l();</div>
<div style="position:absolute;left:41.80px;top:234.00px;width:4.60px;height:1.30px;background:#2460e0;"></div>
<div style="position:absolute;left:192.60px;top:225.00px;height:19px;line-height:19px;font-family:'Liberation Mono', monospace;font-size:13.0px;color:#1f1f1f;white-space:pre;letter-spacing:-0.3703px;">}</div>
<div style="position:absolute;left:66.00px;top:243.00px;width:1192.00px;height:21.00px;background:#fef3ae;border-top:1px solid #fbc714;border-bottom:1px solid #fbc714;box-sizing:border-box;"></div>
<svg style="position:absolute;left:0.00px;top:243.90px;" width="55.00" height="18.60" viewBox="0 0 55 18.6" preserveAspectRatio="none"><path d="M-2 0.5 H51 L54.4 9.3 L51 18.1 H-2 Z" fill="#4285f4" stroke="#1a6fe8" stroke-width="1"/></svg>
<div style="position:absolute;left:41.80px;top:252.00px;width:4.60px;height:1.30px;background:#fff;"></div>
<div style="position:absolute;left:192.40px;top:245.10px;width:6.80px;height:16.00px;background:#b5c9ee;"></div>
<div style="position:absolute;left:192.60px;top:244.00px;height:19px;line-height:19px;font-family:'Liberation Mono', monospace;font-size:13.0px;color:#1f1f1f;white-space:pre;letter-spacing:-0.3703px;">t.length--;</div>
<div style="position:absolute;left:41.80px;top:272.00px;width:4.60px;height:1.30px;background:#2460e0;"></div>
<div style="position:absolute;left:192.60px;top:263.00px;height:19px;line-height:19px;font-family:'Liberation Mono', monospace;font-size:13.0px;color:#1f1f1f;white-space:pre;letter-spacing:-0.3703px;"><span style="color:#c0086a">break</span>;</div>
<div style="position:absolute;left:41.80px;top:291.00px;width:4.60px;height:1.30px;background:#2460e0;"></div>
<div style="position:absolute;left:162.88px;top:282.00px;height:19px;line-height:19px;font-family:'Liberation Mono', monospace;font-size:13.0px;color:#1f1f1f;white-space:pre;letter-spacing:-0.3703px;"><span style="color:#c0086a">case</span> <span style="color:#1660d8">35</span>:</div>
</div>
<div style="position:absolute;left:1533.00px;top:72.00px;width:12.00px;height:297.00px;background:#f6f6f6;"></div>
<svg style="position:absolute;left:1535.40px;top:80.00px;" width="13.00" height="7.00" viewBox="0 0 13 7" preserveAspectRatio="none"><path d="M0 7 L6.5 0 L13 7 Z" fill="#8b8b8b"/></svg>
<svg style="position:absolute;left:1535.40px;top:354.00px;" width="13.00" height="7.00" viewBox="0 0 13 7" preserveAspectRatio="none"><path d="M0 0 L6.5 7 L13 0 Z" fill="#8b8b8b"/></svg>
<div style="position:absolute;left:1537.00px;top:322.00px;width:11.00px;height:21.00px;background:#8b8b8b;border-radius:5px;"></div>
<div style="position:absolute;left:275.00px;top:369.00px;width:1270.00px;height:19.00px;background:#fafafa;"></div>
<svg style="position:absolute;left:282.00px;top:372.20px;" width="7.00" height="12.60" viewBox="0 0 7 12.6" preserveAspectRatio="none"><path d="M7 0 L0 6 L7 12 Z" fill="#8b8b8b"/></svg>
<svg style="position:absolute;left:1519.00px;top:372.50px;" width="7.00" height="12.00" viewBox="0 0 7 12" preserveAspectRatio="none"><path d="M0 0 L7 6 L0 12 Z" fill="#8b8b8b"/></svg>
<div style="position:absolute;left:298.00px;top:373.00px;width:756.00px;height:11.00px;background:#8b8b8b;border-radius:5.5px;"></div>
<div style="position:absolute;left:275.00px;top:388.00px;width:1270.00px;height:1.00px;background:#d3e3fd;"></div>
<div style="position:absolute;left:275.00px;top:389.00px;width:1270.00px;height:37.00px;background:#fff;"></div>
<div style="position:absolute;left:309.00px;top:394.00px;width:1058.00px;height:25.00px;background:#eef2f9;border-radius:12.5px;"></div>
<svg style="position:absolute;left:285.00px;top:398.00px;" width="17.00" height="17.00" viewBox="0 0 17 17" preserveAspectRatio="none">
<text x="0.2" y="7" font-family="Liberation Sans, sans-serif" font-size="9" font-weight="700" fill="#474747">A</text>
<text x="10.6" y="17" font-family="Liberation Sans, sans-serif" font-size="9" font-weight="700" fill="#474747">B</text>
<path d="M3.2 8.2 C3.2 12.2 5.6 13.2 9 13.2 M6.8 10.8 L9.2 13.2 L6.8 15.6" stroke="#474747" stroke-width="1.4" fill="none"/></svg>
<svg style="position:absolute;left:321.00px;top:400.00px;" width="12.40" height="12.40" viewBox="0 0 12.4 12.4" preserveAspectRatio="none"><circle cx="4.7" cy="4.7" r="3.7" stroke="#474747" stroke-width="1.5" fill="none"/><path d="M7.4 7.4 L11.8 11.8" stroke="#474747" stroke-width="1.6"/></svg>
<div style="position:absolute;left:342.60px;top:397.00px;height:19px;line-height:19px;font-family:'Liberation Sans', sans-serif;font-size:14.5px;color:#1f1f1f;white-space:pre;letter-spacing:-0.5226px;">case 29</div>
<svg style="position:absolute;left:1291.60px;top:400.00px;" width="14.40" height="14.40" viewBox="0 0 14.4 14.4" preserveAspectRatio="none"><circle cx="7.2" cy="7.2" r="7.2" fill="#3c3c3c"/><path d="M4.4 4.4 L10 10 M10 4.4 L4.4 10" stroke="#fff" stroke-width="1.5"/></svg>
<div style="position:absolute;left:1314.60px;top:400.00px;height:15px;line-height:15px;font-family:'Liberation Sans', sans-serif;font-size:11.5px;color:#474747;white-space:pre;letter-spacing:-0.0982px;font-weight:700;">(.*)</div>
<div style="position:absolute;left:1338.00px;top:400.00px;height:15px;line-height:15px;font-family:'Liberation Sans', sans-serif;font-size:11.5px;color:#1a6df0;white-space:pre;letter-spacing:-1.2688px;font-weight:700;">Aa</div>
<svg style="position:absolute;left:1381.40px;top:403.40px;" width="11.60" height="7.40" viewBox="0 0 11.6 7.4" preserveAspectRatio="none"><path d="M0.8 6.6 L5.8 1.2 L10.8 6.6" stroke="#474747" stroke-width="1.6" fill="none"/></svg>
<svg style="position:absolute;left:1412.80px;top:403.40px;" width="11.60" height="7.40" viewBox="0 0 11.6 7.4" preserveAspectRatio="none"><path d="M0.8 0.8 L5.8 6.2 L10.8 0.8" stroke="#474747" stroke-width="1.6" fill="none"/></svg>
<div style="position:absolute;left:1444.60px;top:397.00px;height:19px;line-height:19px;font-family:'Liberation Sans', sans-serif;font-size:14.5px;color:#474747;white-space:pre;letter-spacing:-0.2243px;">9 matches</div>
<svg style="position:absolute;left:1529.40px;top:402.00px;" width="10.80" height="10.80" viewBox="0 0 10.8 10.8" preserveAspectRatio="none"><path d="M0.6 0.6 L10.2 10.2 M10.2 0.6 L0.6 10.2" stroke="#303030" stroke-width="1.6"/></svg>
<div style="position:absolute;left:275.00px;top:425.40px;width:1270.00px;height:1.00px;background:#d3e3fd;"></div>
<div style="position:absolute;left:275.00px;top:427.00px;width:1270.00px;height:28.00px;background:#fff;"></div>
<svg style="position:absolute;left:284.00px;top:433.00px;" width="18.00" height="13.20" viewBox="0 0 18 13.2" preserveAspectRatio="none"><path d="M6.2 1 H5.2 A2 2 0 0 0 3.2 3 V4.8 A1.8 1.8 0 0 1 1.2 6.6 A1.8 1.8 0 0 1 3.2 8.4 V10.2 A2 2 0 0 0 5.2 12.2 H6.2 M11.8 1 H12.8 A2 2 0 0 1 14.8 3 V4.8 A1.8 1.8 0 0 0 16.8 6.6 A1.8 1.8 0 0 0 14.8 8.4 V10.2 A2 2 0 0 1 12.8 12.2 H11.8" stroke="#1a66f0" stroke-width="2" fill="none"/></svg>
<div style="position:absolute;left:315.00px;top:432.00px;height:19px;line-height:19px;font-family:'Liberation Sans', sans-serif;font-size:14.5px;color:#474747;white-space:pre;letter-spacing:-0.1624px;">40 characters selected</div>
<div style="position:absolute;left:1444.80px;top:430.00px;height:18px;line-height:18px;font-family:'Liberation Sans', sans-serif;font-size:14.2px;color:#1a63d6;white-space:pre;letter-spacing:-0.3940px;">Coverage: n/a</div>
<div style="position:absolute;left:0.00px;top:455.00px;width:1545.00px;height:1.00px;background:#d3e3fd;"></div>
<div style="position:absolute;left:0.00px;top:456.00px;width:1545.00px;height:29.40px;background:#eef2f9;"></div>
<div style="position:absolute;left:0.00px;top:485.20px;width:1545.00px;height:1.00px;background:#d3e3fd;"></div>
<svg style="position:absolute;left:10.00px;top:465.00px;" width="4.60" height="12.60" viewBox="0 0 4.6 12.6" preserveAspectRatio="none"><circle cx="2.3" cy="1.7" r="1.6" fill="#474747"/><circle cx="2.3" cy="6.3" r="1.6" fill="#474747"/><circle cx="2.3" cy="10.9" r="1.6" fill="#474747"/></svg>
<div style="position:absolute;left:37.00px;top:463.00px;height:19px;line-height:19px;font-family:'Liberation Sans', sans-serif;font-size:14.5px;color:#0b57d0;white-space:pre;letter-spacing:-0.2774px;">Console</div>
<div style="position:absolute;left:26.00px;top:482.60px;width:75.00px;height:3.00px;background:#0b57d0;border-radius:3px 3px 0 0;"></div>
<div style="position:absolute;left:112.60px;top:463.00px;height:19px;line-height:19px;font-family:'Liberation Sans', sans-serif;font-size:14.5px;color:#474747;white-space:pre;letter-spacing:-0.3880px;">AI assistance</div>
<svg style="position:absolute;left:200.40px;top:463.60px;" width="11.40" height="13.60" viewBox="0 0 11.4 13.6" preserveAspectRatio="none"><path d="M3.6 0.9 H7.8 M4.5 0.9 V5.2 L1 11.4 A0.9 0.9 0 0 0 1.8 12.7 H9.6 A0.9 0.9 0 0 0 10.4 11.4 L6.9 5.2 V0.9" stroke="#474747" stroke-width="1.4" fill="none" stroke-linejoin="round"/></svg>
<div style="position:absolute;left:249.60px;top:463.00px;height:19px;line-height:19px;font-family:'Liberation Sans', sans-serif;font-size:14.5px;color:#474747;white-space:pre;letter-spacing:-0.6460px;">Search</div>
<div style="position:absolute;left:0.00px;top:486.20px;width:1545.00px;height:30.00px;background:#fff;"></div>
<svg style="position:absolute;left:4.10px;top:493.20px;" width="15.70" height="15.60" viewBox="0 0 15.2 14.6" preserveAspectRatio="none">
<rect x="0.9" y="0.9" width="13.4" height="12.8" rx="1.3" stroke="#474747" stroke-width="1.7" fill="none"/>
<path d="M4.9 1 V14" stroke="#474747" stroke-width="1.7"/>
<path d="M7.6 4.2 L11.4 7.3 L7.6 10.4 Z" fill="#474747"/></svg>
<svg style="position:absolute;left:36.00px;top:493.00px;" width="16.00" height="16.00" viewBox="0 0 16 16" preserveAspectRatio="none"><circle cx="8" cy="8" r="7" stroke="#474747" stroke-width="1.7" fill="none"/><path d="M3.2 12.8 L12.8 3.2" stroke="#474747" stroke-width="1.7"/></svg>
<div style="position:absolute;left:64.00px;top:492.00px;width:1.00px;height:18.60px;background:#c9d9f6;"></div>
<div style="position:absolute;left:79.00px;top:493.00px;height:19px;line-height:19px;font-family:'Liberation Sans', sans-serif;font-size:14.5px;color:#474747;white-space:pre;letter-spacing:0.3312px;">top</div>
<svg style="position:absolute;left:107.00px;top:499.20px;" width="8.60" height="6.00" viewBox="0 0 8.6 6" preserveAspectRatio="none"><path d="M0 0 H8.6 L4.3 6 Z" fill="#474747"/></svg>
<div style="position:absolute;left:128.00px;top:492.00px;width:1.00px;height:18.60px;background:#c9d9f6;"></div>
<svg style="position:absolute;left:139.00px;top:495.00px;" width="20.00" height="12.60" viewBox="0 0 20 12.6" preserveAspectRatio="none"><path d="M1 6.3 C4 -0.6 16 -0.6 19 6.3 C16 13.2 4 13.2 1 6.3 Z" stroke="#474747" stroke-width="1.6" fill="none"/><circle cx="10" cy="6.3" r="3" stroke="#474747" stroke-width="1.6" fill="none"/></svg>
<div style="position:absolute;left:169.40px;top:492.00px;width:1.00px;height:18.60px;background:#c9d9f6;"></div>
<div style="position:absolute;left:178.00px;top:490.40px;width:1400.00px;height:21.80px;background:#eef2f9;border-radius:11px;"></div>
<svg style="position:absolute;left:190.60px;top:495.40px;" width="10.40" height="11.40" viewBox="0 0 10.4 11.4" preserveAspectRatio="none"><path d="M0.9 0.9 H9.5 L5.2 6.2 Z M5.2 6 V10.8" stroke="#474747" stroke-width="1.5" fill="none" stroke-linejoin="round"/></svg>
<div style="position:absolute;left:210.00px;top:493.00px;height:19px;line-height:19px;font-family:'Liberation Sans', sans-serif;font-size:14.5px;color:#474747;white-space:pre;letter-spacing:-0.0426px;">Filter</div>
<div style="position:absolute;left:0.00px;top:516.00px;width:1545.00px;height:1.00px;background:#e1eafb;"></div>
<div style="position:absolute;left:0;top:517px;width:1545px;height:208px;overflow:hidden;background:#fff">
<svg style="position:absolute;left:34.60px;top:-2.60px;" width="4.60" height="8.40" viewBox="0 0 4.6 8.4" preserveAspectRatio="none"><path d="M0 0 L4.8 4.4 L0 8.8 Z" fill="#474747"/></svg>
<svg style="position:absolute;left:10.60px;top:-3.40px;" width="8.00" height="8.00" viewBox="0 0 8 8" preserveAspectRatio="none"><path d="M5 0.6 L1 4 L5 7.4" stroke="#474747" stroke-width="1.4" fill="none"/></svg>
<div style="position:absolute;left:46.00px;top:-7.00px;height:19px;line-height:19px;font-family:'Liberation Mono', monospace;font-size:13.0px;color:#1f1f1f;white-space:pre;letter-spacing:-0.3703px;font-style:italic;">(2) [<span style="color:#dc362e">'ri_uxFOm2SXW3pYS_qoQ_h7i7q4iFlsm0msSIlsmOGuj4uMgM2…QOCrh42YUXt8g_2si9usZgt8S3xoVAJ4ZMuMgMqYR7lsmOG_Q'</span>, _$tu]</div>
<div style="position:absolute;left:26.00px;top:14.00px;width:1520.00px;height:1.00px;background:#dde7fb;"></div>
<svg style="position:absolute;left:12.00px;top:22.40px;" width="6.00" height="9.40" viewBox="0 0 6 9.4" preserveAspectRatio="none"><path d="M0.8 0.8 L5 4.7 L0.8 8.6" stroke="#474747" stroke-width="1.4" fill="none"/></svg>
<div style="position:absolute;left:26.00px;top:18.00px;height:19px;line-height:19px;font-family:'Liberation Mono', monospace;font-size:13.0px;color:#1f1f1f;white-space:pre;letter-spacing:-0.3703px;">t[<span style="color:#1660d8">0</span>].length</div>
<div style="position:absolute;left:26.00px;top:38.00px;width:1520.00px;height:1.00px;background:#dde7fb;"></div>
<svg style="position:absolute;left:11.00px;top:47.00px;" width="9.00" height="8.40" viewBox="0 0 9 8.4" preserveAspectRatio="none"><path d="M5 0.7 L1 4.2 L5 7.7" stroke="#474747" stroke-width="1.4" fill="none"/><circle cx="7.6" cy="4.2" r="0.9" fill="#474747"/></svg>
<div style="position:absolute;left:26.00px;top:42.00px;height:19px;line-height:19px;font-family:'Liberation Mono', monospace;font-size:13.0px;color:#0842a0;white-space:pre;letter-spacing:-0.3703px;">744</div>
<div style="position:absolute;left:26.00px;top:62.00px;width:1520.00px;height:1.00px;background:#dde7fb;"></div>
<svg style="position:absolute;left:12.00px;top:70.40px;" width="6.00" height="9.40" viewBox="0 0 6 9.4" preserveAspectRatio="none"><path d="M0.8 0.8 L5 4.7 L0.8 8.6" stroke="#474747" stroke-width="1.4" fill="none"/></svg>
<div style="position:absolute;left:26.00px;top:66.00px;height:19px;line-height:19px;font-family:'Liberation Mono', monospace;font-size:13.0px;color:#a5146e;white-space:pre;letter-spacing:-0.3703px;">this</div>
<div style="position:absolute;left:26.00px;top:86.40px;width:1520.00px;height:1.00px;background:#dde7fb;"></div>
<svg style="position:absolute;left:11.00px;top:96.00px;" width="9.00" height="8.40" viewBox="0 0 9 8.4" preserveAspectRatio="none"><path d="M5 0.7 L1 4.2 L5 7.7" stroke="#474747" stroke-width="1.4" fill="none"/><circle cx="7.6" cy="4.2" r="0.9" fill="#474747"/></svg>
<svg style="position:absolute;left:33.00px;top:98.20px;" width="8.40" height="4.60" viewBox="0 0 8.4 4.6" preserveAspectRatio="none"><path d="M0 0 H8.4 L4.2 4.6 Z" fill="#474747"/></svg>
<div style="position:absolute;left:44.40px;top:91.00px;height:19px;line-height:19px;font-family:'Liberation Mono', monospace;font-size:13.0px;color:#1f1f1f;white-space:pre;letter-spacing:-0.3703px;font-style:italic;">_$tu {<span style="color:#8a8d91">_token</span>: <span style="color:#dc362e">'tk03wc1281d0718nmU4N8KikkpBofqI-V3aFJphOF7Qo5B5yfohNyiujuPhtNnaln5gOSwYAL66Uvqu7fXcAdo9IsSlC'</span>, <span style="color:#8a8d91">_defaultToken</span>: <span style="color:#dc362e">''</span>, <span style="color:#8a8d91">_isNormal</span>: <span style="color:#0842a0">true</span>, <span style="color:#8a8d91">_appId</span>: <span style="color:#dc362e">'73806'</span>, <span style="color:#8a8d91">_defaultAlgorithm</span>: {…}, …}</div>
<div style="position:absolute;left:1456.00px;top:94.00px;width:12.00px;height:13.00px;background:#d3e3fd;border-radius:3px;"></div>
<div style="position:absolute;left:1459.40px;top:94.00px;height:14px;line-height:14px;font-family:'Liberation Mono', monospace;font-size:10.5px;color:#1f1f1f;white-space:pre;font-style:italic;">i</div>
<svg style="position:absolute;left:48.60px;top:113.40px;" width="4.00" height="7.80" viewBox="0 0 4 7.8" preserveAspectRatio="none"><path d="M0 0 L4 3.9 L0 7.8 Z" fill="#474747"/></svg>
<div style="position:absolute;left:59.00px;top:109.00px;height:19px;line-height:19px;font-family:'Liberation Mono', monospace;font-size:13.0px;color:#1f1f1f;white-space:pre;letter-spacing:-0.3703px;"><span style="color:#8f1454;font-weight:700">__genKey</span>: <span style="font-style:italic"><span style="color:#0842a0">ƒ</span> test(tk,fp,ts,ai,algo)</span></div>
<svg style="position:absolute;left:48.60px;top:131.40px;" width="4.00" height="7.80" viewBox="0 0 4 7.8" preserveAspectRatio="none"><path d="M0 0 L4 3.9 L0 7.8 Z" fill="#474747"/></svg>
<div style="position:absolute;left:59.00px;top:127.00px;height:19px;line-height:19px;font-family:'Liberation Mono', monospace;font-size:13.0px;color:#1f1f1f;white-space:pre;letter-spacing:-0.3703px;"><span style="color:#8f1454;font-weight:700">_algos</span>: {<span style="color:#8a8d91">MD5</span>: <span style="font-style:italic">ƒ</span>, <span style="color:#8a8d91">SHA256</span>: <span style="font-style:italic">ƒ</span>, <span style="color:#8a8d91">HmacSHA256</span>: <span style="font-style:italic">ƒ</span>, <span style="color:#8a8d91">HmacMD5</span>: <span style="font-style:italic">ƒ</span>}</div>
<div style="position:absolute;left:59.00px;top:145.00px;height:19px;line-height:19px;font-family:'Liberation Mono', monospace;font-size:13.0px;color:#1f1f1f;white-space:pre;letter-spacing:-0.3703px;"><span style="color:#8f1454;font-weight:700">_appId</span>: <span style="color:#dc362e">&quot;73806&quot;</span></div>
<div style="position:absolute;left:59.00px;top:163.00px;height:19px;line-height:19px;font-family:'Liberation Mono', monospace;font-size:13.0px;color:#1f1f1f;white-space:pre;letter-spacing:-0.3703px;"><span style="color:#8f1454;font-weight:700">_debug</span>: <span style="color:#0842a0">false</span></div>
<svg style="position:absolute;left:48.60px;top:185.40px;" width="4.00" height="7.80" viewBox="0 0 4 7.8" preserveAspectRatio="none"><path d="M0 0 L4 3.9 L0 7.8 Z" fill="#474747"/></svg>
<div style="position:absolute;left:59.00px;top:181.00px;height:19px;line-height:19px;font-family:'Liberation Mono', monospace;font-size:13.0px;color:#1f1f1f;white-space:pre;letter-spacing:-0.3703px;"><span style="color:#8f1454;font-weight:700">_defaultAlgorithm</span>: {<span style="color:#8a8d91">local_key_1</span>: <span style="font-style:italic">ƒ</span>, <span style="color:#8a8d91">local_key_2</span>: <span style="font-style:italic">ƒ</span>, <span style="color:#8a8d91">local_key_3</span>: <span style="font-style:italic">ƒ</span>}</div>
<div style="position:absolute;left:59.00px;top:199.00px;height:19px;line-height:19px;font-family:'Liberation Mono', monospace;font-size:13.0px;color:#1f1f1f;white-space:pre;letter-spacing:-0.3703px;"><span style="color:#8f1454;font-weight:700">_defaultToken</span>: <span style="color:#dc362e">&quot;&quot;</span></div>
</div>
</body></html>
